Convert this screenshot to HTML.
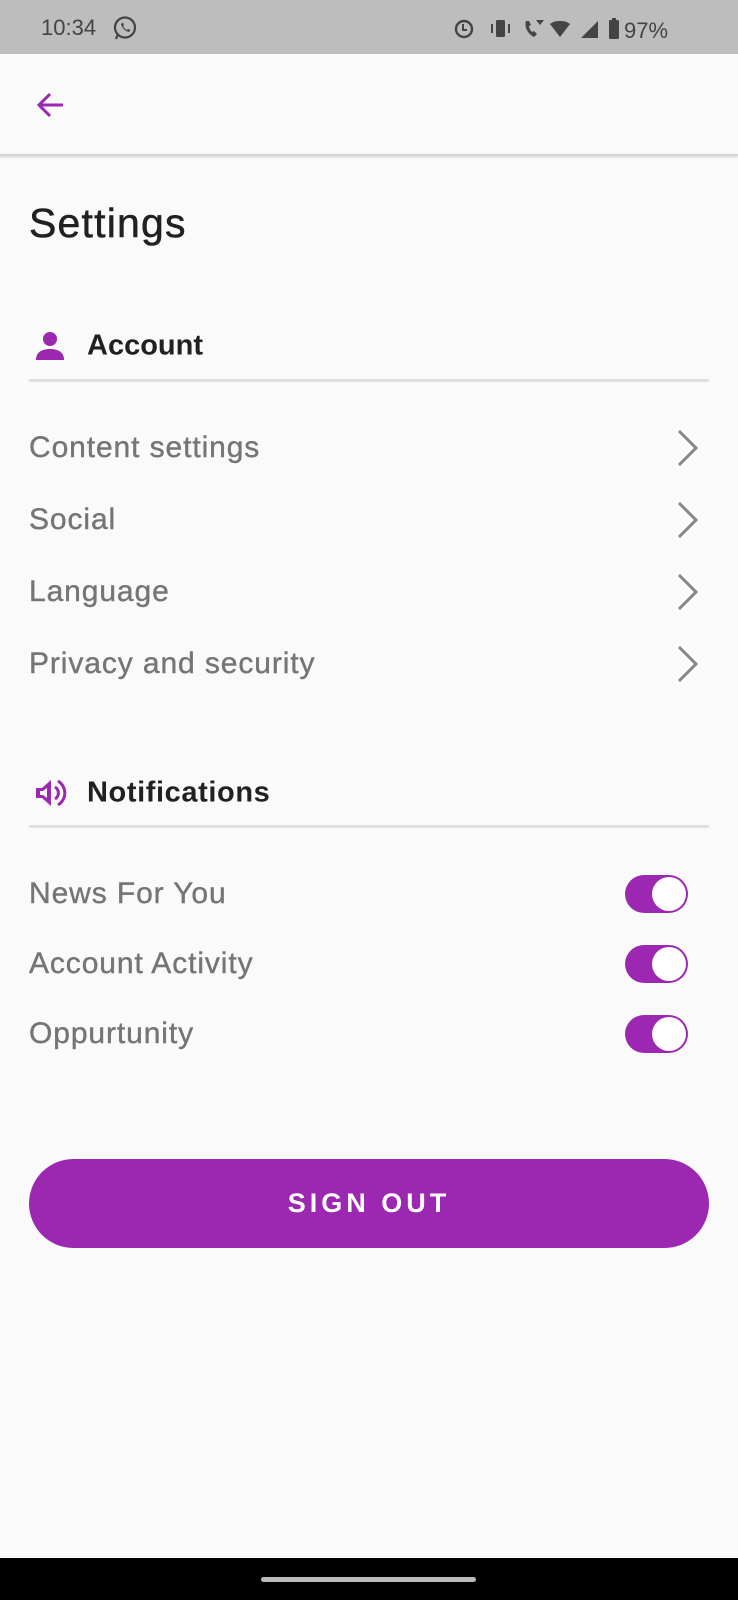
<!DOCTYPE html>
<html><head><meta charset="utf-8"><style>
body{margin:0;width:738px;height:1600px;background:#fafafa;font-family:"Liberation Sans",sans-serif;position:relative;overflow:hidden}
.a{position:absolute}
.sb{left:0;top:0;width:738px;height:54px;background:#bdbdbd}
.row{left:29px;font-size:30px;letter-spacing:0.9px;color:#757575;transform:translateY(-50%);-webkit-text-stroke:0.4px #757575}
.chev{left:676px;width:24px;height:40px;transform:translateY(-50%)}
.tg{left:625px;width:63px;height:38px;border-radius:19px;background:#9c27b0;transform:translateY(-50%)}
.tg:after{content:"";position:absolute;right:2px;top:2px;width:34px;height:34px;border-radius:50%;background:#fff}
.div{left:29px;width:680px;height:3px;background:#e0e0e0}
.h{left:87px;font-size:29px;font-weight:bold;color:#212121;transform:translateY(-50%)}
</style></head><body>
<div class="a sb"></div>
<div class="a" style="left:41px;top:15px;font-size:22px;color:#444">10:34</div>
<svg class="a" style="left:112px;top:15px" width="26" height="26" viewBox="0 0 26 26"><circle cx="13" cy="12.5" r="10" fill="none" stroke="#444" stroke-width="2.2"/><path d="M4 24l2-5" stroke="#444" stroke-width="2.2"/><path d="M9 9c1 4 4 7 8 8l1.5-2-2.5-1-1 1c-2-1-3-2-4-4l1-1-1-2.5z" fill="#444"/></svg>
<svg class="a" style="left:450px;top:15px" width="250" height="28" viewBox="0 0 250 28"><g fill="#444"><circle cx="14" cy="14" r="8" fill="none" stroke="#444" stroke-width="2.4"/><path d="M13 9v6h4" stroke="#444" stroke-width="2" fill="none"/><rect x="46" y="5" width="9" height="17" rx="1.5"/><rect x="41" y="9" width="2" height="9"/><rect x="58" y="9" width="2" height="9"/><path d="M76 6c-2 6 2 13 8 16l3-3-3-3-2 1c-2-2-3-4-3-6l2-1-2-4z"/><path d="M86 5l8 0-4 5z"/><path d="M100 9a16 14 0 0 1 20 0l-10 13z"/><path d="M148 6v17h-17z"/><rect x="159" y="5" width="10" height="19" rx="1.5"/><rect x="162" y="3" width="4" height="3"/></g><text x="174" y="23" font-family="Liberation Sans" font-size="22" fill="#444">97%</text></svg>
<svg class="a" style="left:34px;top:89px" width="32" height="32" viewBox="0 0 32 32"><path d="M29 16H5M16 5L5 16l11 11" stroke="#9c27b0" stroke-width="3" fill="none"/></svg>
<div class="a" style="left:0;top:154px;width:738px;height:2px;background:#d6d6d6;box-shadow:0 1px 2px #ccc"></div>
<div class="a" style="left:29px;top:200px;font-size:41px;letter-spacing:1.2px;color:#212121;-webkit-text-stroke:0.5px #212121">Settings</div>
<svg class="a" style="left:34px;top:330px" width="32" height="32" viewBox="0 0 32 32"><circle cx="16" cy="9" r="7" fill="#9c27b0"/><path d="M2 30c0-8 6-11 14-11s14 3 14 11z" fill="#9c27b0"/></svg>
<div class="a h" style="top:346px">Account</div>
<div class="a div" style="top:379px"></div>
<div class="a row" style="top:448px">Content settings</div>
<div class="a row" style="top:520px">Social</div>
<div class="a row" style="top:592px">Language</div>
<div class="a row" style="top:664px">Privacy and security</div>
<svg class="a chev" style="top:448px" viewBox="0 0 24 40"><path d="M3 3l17 17L3 37" stroke="#888" stroke-width="3" fill="none"/></svg>
<svg class="a chev" style="top:520px" viewBox="0 0 24 40"><path d="M3 3l17 17L3 37" stroke="#888" stroke-width="3" fill="none"/></svg>
<svg class="a chev" style="top:592px" viewBox="0 0 24 40"><path d="M3 3l17 17L3 37" stroke="#888" stroke-width="3" fill="none"/></svg>
<svg class="a chev" style="top:664px" viewBox="0 0 24 40"><path d="M3 3l17 17L3 37" stroke="#888" stroke-width="3" fill="none"/></svg>
<svg class="a" style="left:33px;top:776px" width="34" height="34" viewBox="0 0 34 34"><path d="M3 12h6l9-8v26l-9-8H3z" fill="#9c27b0"/><path d="M7 15v4h3l4 3V12l-4 3z" fill="#fafafa"/><path d="M22 11a7 7 0 0 1 0 12M25 5a14 14 0 0 1 0 24" stroke="#9c27b0" stroke-width="3" fill="none"/></svg>
<div class="a h" style="top:793px;letter-spacing:0.6px">Notifications</div>
<div class="a div" style="top:825px"></div>
<div class="a row" style="top:894px">News For You</div>
<div class="a row" style="top:964px">Account Activity</div>
<div class="a row" style="top:1034px">Oppurtunity</div>
<div class="a tg" style="top:894px"></div>
<div class="a tg" style="top:964px"></div>
<div class="a tg" style="top:1034px"></div>
<div class="a" style="left:29px;top:1159px;width:680px;height:89px;border-radius:45px;background:#9c27b0;color:#fff;font-size:27px;font-weight:bold;letter-spacing:4px;text-align:center;line-height:89px">SIGN OUT</div>
<div class="a" style="left:0;top:1558px;width:738px;height:42px;background:#000"></div>
<div class="a" style="left:261px;top:1577px;width:215px;height:5px;border-radius:3px;background:#bbb"></div>
</body></html>
